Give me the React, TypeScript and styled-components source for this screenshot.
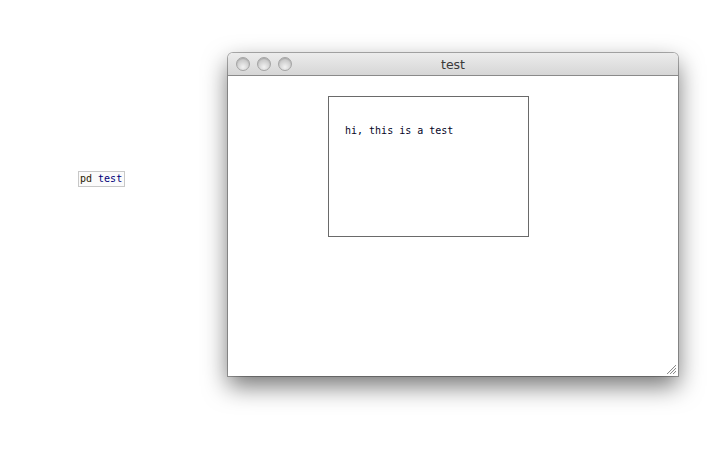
import React from "react";
import styled, { createGlobalStyle } from "styled-components";

const Global = createGlobalStyle`
  html, body { margin: 0; padding: 0; background: #ffffff; }
  body { width: 721px; height: 473px; overflow: hidden; }
`;

const Desktop = styled.div`
  position: relative;
  width: 721px;
  height: 473px;
  background: #ffffff;
`;

const PdMain = styled.div`
  position: absolute;
  left: 78px;
  top: 171px;
  height: 14px;
  padding: 0 2px 0 1px;
  border: 1px solid #c8c8c8;
  background: #fbfbfb;
  font-family: "DejaVu Sans Mono", monospace;
  font-size: 10px;
  line-height: 14px;
  white-space: pre;
`;

const Word = styled.span<{ $c: string }>`
  color: ${(p) => p.$c};
`;

const Window = styled.div`
  position: absolute;
  left: 228px;
  top: 53px;
  width: 450px;
  height: 323px;
  display: flex;
  flex-direction: column;
  border-radius: 5px 5px 0 0;
  box-shadow: 0 0 0 1px rgba(0, 0, 0, 0.3), 0 10px 24px rgba(0, 0, 0, 0.55);
  background: #ffffff;
  overflow: hidden;
`;

const TitleBar = styled.div`
  position: relative;
  height: 23px;
  flex: none;
  display: flex;
  align-items: center;
  padding-left: 8px;
  gap: 7px;
  background: linear-gradient(#ececec, #d6d6d6);
  border-bottom: 1px solid #8a8a8a;
  box-sizing: border-box;
`;

const Light = styled.div`
  width: 14px;
  height: 14px;
  box-sizing: border-box;
  border-radius: 50%;
  border: 1px solid #a4a4a4;
  background: radial-gradient(circle at 50% 75%, #f2f2f2 0%, #d0d0d0 55%, #bdbdbd 100%);
  box-shadow: inset 0 1px 1px rgba(0, 0, 0, 0.15);
`;

const Title = styled.div`
  position: absolute;
  left: 0;
  right: 0;
  top: 0;
  bottom: 0;
  display: flex;
  align-items: center;
  justify-content: center;
  font-family: "DejaVu Sans", sans-serif;
  font-size: 12.5px;
  color: #3a3a3a;
  pointer-events: none;
`;

const Canvas = styled.div`
  position: relative;
  flex: 1;
  background: #ffffff;
`;

const Comment = styled.div`
  position: absolute;
  left: 100px;
  top: 20px;
  width: 201px;
  height: 141px;
  box-sizing: border-box;
  border: 1px solid #6a6a6a;
  padding: 27px 0 0 16px;
  font-family: "DejaVu Sans Mono", monospace;
  font-size: 10px;
  line-height: 14px;
  color: #05051f;
  white-space: pre;
`;

const Grip = styled.svg`
  position: absolute;
  right: 1px;
  bottom: 1px;
`;

export default function App() {
  return (
    <>
      <Global />
      <Desktop>
        <PdMain>
          <Word $c="#2a1a00">pd</Word> <Word $c="#00007a">test</Word>
        </PdMain>
        <Window>
          <TitleBar>
            <Light />
            <Light />
            <Light />
            <Title>test</Title>
          </TitleBar>
          <Canvas>
            <Comment>hi, this is a test</Comment>
            <Grip width="11" height="11" viewBox="0 0 11 11">
              <path d="M1 10 L10 1 M4 10 L10 4 M7 10 L10 7" stroke="#8c8c8c" strokeWidth="1" />
              <path d="M2 10 L10 2 M5 10 L10 5 M8 10 L10 8" stroke="#f4f4f4" strokeWidth="1" />
            </Grip>
          </Canvas>
        </Window>
      </Desktop>
    </>
  );
}
